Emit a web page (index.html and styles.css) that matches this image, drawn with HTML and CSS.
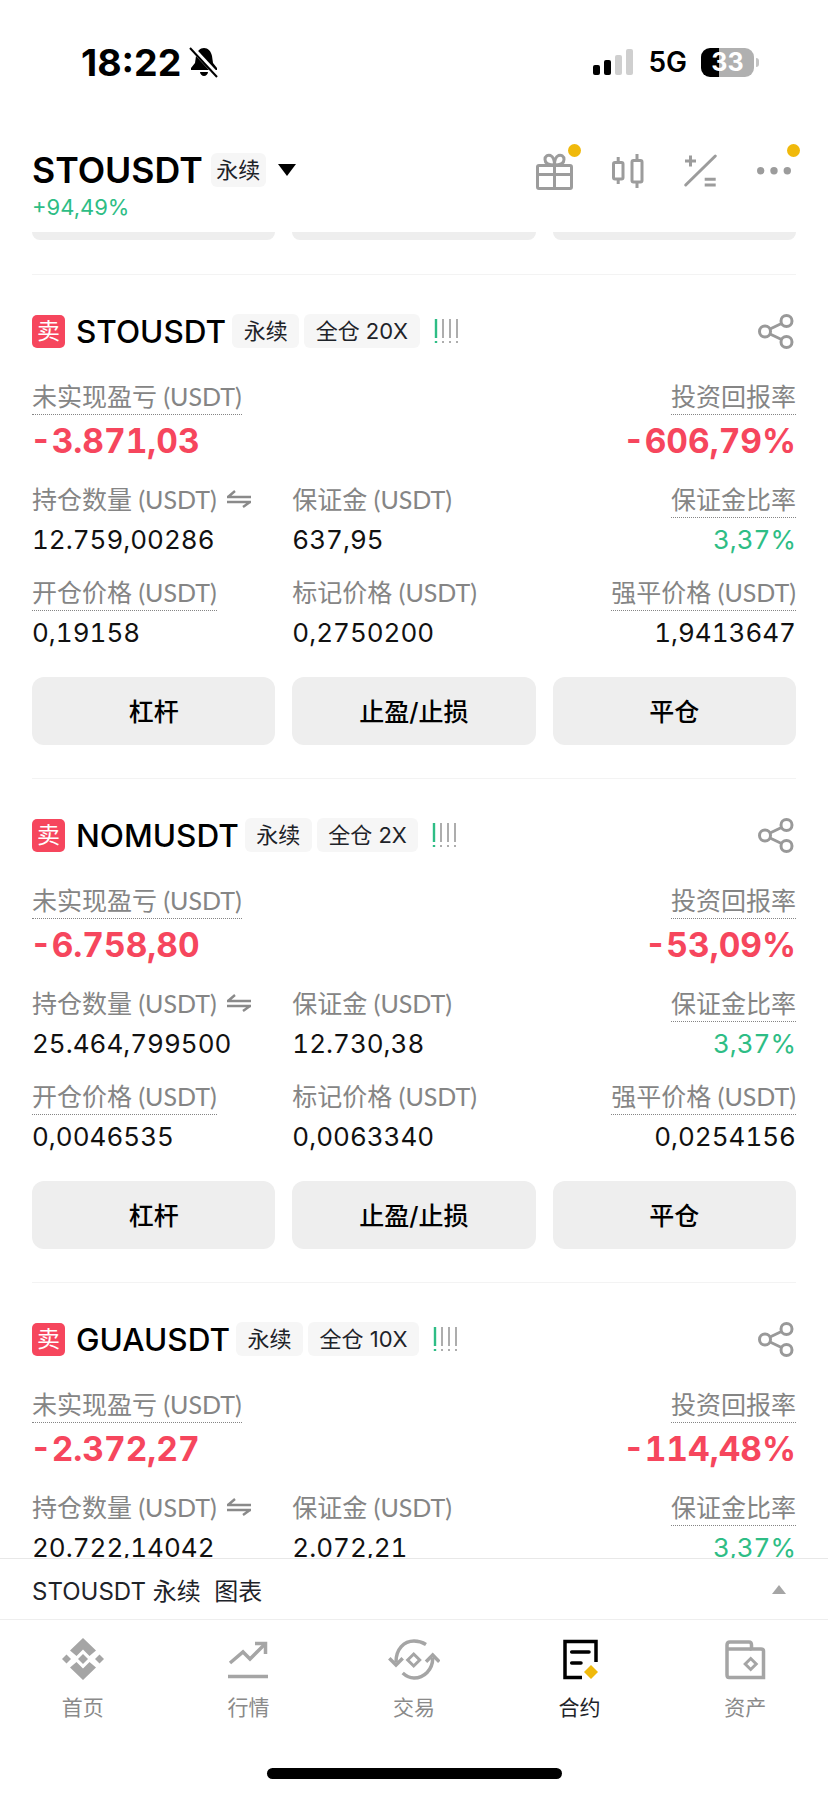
FILE: index.html
```html
<!DOCTYPE html>
<html lang="zh-CN">
<head>
    <meta charset="UTF-8">
    <meta name="viewport" content="width=device-width, initial-scale=1.0">
    <title>STOUSDT 永续</title>
    <link rel="stylesheet" href="styles.css">
</head>
<body>
    <!-- Shared icons -->
    <svg class="sprite" aria-hidden="true">
        <symbol id="icon-share" viewBox="0 0 36 36">
            <g fill="none" stroke="#999" stroke-width="3">
                <circle cx="28.5" cy="8" r="5.5"/>
                <circle cx="28.5" cy="29" r="5.5"/>
                <circle cx="7" cy="18.5" r="5.5"/>
                <path d="M12 16 23.500 10.500M12 21 23.500 26.500"/>
            </g>
        </symbol>
        <symbol id="icon-risk" viewBox="0 0 26 26">
            <g fill="none" stroke-width="1.8">
                <path d="M2 1V20M2 23V25" stroke="#2ebd85" stroke-width="2.4"/>
                <path d="M9 1V20M9 23V25M16 1V20M16 23V25M23 1V20M23 23V25" stroke="#a5a5a5"/>
            </g>
        </symbol>
        <symbol id="icon-swap" viewBox="0 0 26 18">
            <g fill="none" stroke="#8a8a8a" stroke-width="2.4">
                <path d="M1 7H25M2 7 9 1"/>
                <path d="M1 12H25M24 12 17 17"/>
            </g>
        </symbol>
    </svg>

    <div class="screen">
        <!-- Status bar -->
        <div class="status-bar">
            <div class="status-left">
                <span class="clock">18:22</span>
                <svg class="bell" width="30" height="32" viewBox="0 0 30 32">
                    <path d="M15 2c-4 0-7 3-8 8l-1 7-4 5v2h26v-2l-4-5-1-7c-1-5-4-8-8-8zM11 26h8c0 2-2 4-4 4s-4-2-4-4z" fill="#000"/>
                    <path d="M2 1 29 30" stroke="#fff" stroke-width="5"/>
                    <path d="M1 2 28 31" stroke="#000" stroke-width="2"/>
                </svg>
            </div>
            <div class="status-right">
                <div class="signal">
                    <span class="signal-bar bar-1"></span>
                    <span class="signal-bar bar-2"></span>
                    <span class="signal-bar bar-3"></span>
                    <span class="signal-bar bar-4"></span>
                </div>
                <span class="network">5G</span>
                <div class="battery"><span class="battery-level">33</span></div>
                <span class="battery-tip"></span>
            </div>
        </div>

        <!-- Header -->
        <header class="top-header">
            <div class="symbol-box">
                <div class="symbol-row">
                    <span class="symbol-name">STOUSDT</span>
                    <span class="chip chip-top">永续</span>
                    <span class="caret-down"></span>
                </div>
                <div class="symbol-change">+94,49%</div>
            </div>
            <div class="header-icons">
                <div class="header-icon">
                    <svg width="40" height="40" viewBox="0 0 40 40" fill="none" stroke="#9c9c9c" stroke-width="3">
                        <rect x="2.5" y="14.5" width="34" height="23" rx="1.5"/>
                        <path d="M2.5 23.5H36.5M19.5 14.5V37.5"/>
                        <path d="M19.5 14C13 14 10 12 10 8.5 10 5 13 3.5 15.5 4.5 17.5 5.5 19.5 9 19.5 14 19.5 9 21.5 5.5 23.5 4.5 26 3.5 29 5 29 8.5 29 12 26 14 19.5 14Z"/>
                    </svg>
                    <span class="dot"></span>
                </div>
                <div class="header-icon">
                    <svg width="40" height="40" viewBox="0 0 40 40" fill="none" stroke="#9c9c9c" stroke-width="3">
                        <rect x="5.5" y="11.5" width="9.500" height="16.500" rx="1.500"/>
                        <rect x="24" y="9.500" width="10" height="21.500" rx="1.500"/>
                        <path d="M10.200 6V11M10.200 28V33M29 3V9M29 31V37"/>
                    </svg>
                </div>
                <div class="header-icon">
                    <svg width="40" height="40" viewBox="0 0 40 40" fill="none" stroke="#9c9c9c" stroke-width="3">
                        <path d="M4.700 34 34.300 5" stroke-linecap="round"/>
                        <path d="M4 10H15M9.500 4.500V15.500M23.700 28.300H34.700M23.700 34H34.700"/>
                    </svg>
                </div>
                <div class="header-icon">
                    <svg width="40" height="40" viewBox="0 0 40 40" fill="#9c9c9c">
                        <circle cx="6.700" cy="19.700" r="3.700"/>
                        <circle cx="20" cy="19.700" r="3.700"/>
                        <circle cx="33.300" cy="19.700" r="3.700"/>
                    </svg>
                    <span class="dot"></span>
                </div>
            </div>
        </header>

        <!-- Positions -->
        <main class="positions">
            <div class="button-stubs">
                <span></span><span></span><span></span>
            </div>

            <section class="position">
                <div class="position-head">
                    <span class="side-badge">卖</span>
                    <span class="position-name">STOUSDT</span>
                    <span class="chip">永续</span>
                    <span class="chip">全仓 20X</span>
                    <svg class="risk"><use href="#icon-risk"/></svg>
                    <svg class="share"><use href="#icon-share"/></svg>
                </div>
                <div class="pnl-row">
                    <div class="stat">
                        <span class="label dotted">未实现盈亏 (USDT)</span>
                        <span class="pnl">-3.871,03</span>
                    </div>
                    <div class="stat stat-right">
                        <span class="label dotted">投资回报率</span>
                        <span class="pnl">-606,79%</span>
                    </div>
                </div>
                <div class="stat-grid">
                    <div class="stat">
                        <span class="label">持仓数量 (USDT) <svg class="swap"><use href="#icon-swap"/></svg></span>
                        <span class="value">12.759,00286</span>
                    </div>
                    <div class="stat">
                        <span class="label">保证金 (USDT)</span>
                        <span class="value">637,95</span>
                    </div>
                    <div class="stat stat-right">
                        <span class="label dotted">保证金比率</span>
                        <span class="value green">3,37%</span>
                    </div>
                    <div class="stat">
                        <span class="label dotted">开仓价格 (USDT)</span>
                        <span class="value">0,19158</span>
                    </div>
                    <div class="stat">
                        <span class="label">标记价格 (USDT)</span>
                        <span class="value">0,2750200</span>
                    </div>
                    <div class="stat stat-right">
                        <span class="label dotted">强平价格 (USDT)</span>
                        <span class="value">1,9413647</span>
                    </div>
                </div>
                <div class="actions">
                    <button class="action-btn">杠杆</button>
                    <button class="action-btn">止盈/止损</button>
                    <button class="action-btn">平仓</button>
                </div>
            </section>

            <section class="position">
                <div class="position-head">
                    <span class="side-badge">卖</span>
                    <span class="position-name">NOMUSDT</span>
                    <span class="chip">永续</span>
                    <span class="chip">全仓 2X</span>
                    <svg class="risk"><use href="#icon-risk"/></svg>
                    <svg class="share"><use href="#icon-share"/></svg>
                </div>
                <div class="pnl-row">
                    <div class="stat">
                        <span class="label dotted">未实现盈亏 (USDT)</span>
                        <span class="pnl">-6.758,80</span>
                    </div>
                    <div class="stat stat-right">
                        <span class="label dotted">投资回报率</span>
                        <span class="pnl">-53,09%</span>
                    </div>
                </div>
                <div class="stat-grid">
                    <div class="stat">
                        <span class="label">持仓数量 (USDT) <svg class="swap"><use href="#icon-swap"/></svg></span>
                        <span class="value">25.464,799500</span>
                    </div>
                    <div class="stat">
                        <span class="label">保证金 (USDT)</span>
                        <span class="value">12.730,38</span>
                    </div>
                    <div class="stat stat-right">
                        <span class="label dotted">保证金比率</span>
                        <span class="value green">3,37%</span>
                    </div>
                    <div class="stat">
                        <span class="label dotted">开仓价格 (USDT)</span>
                        <span class="value">0,0046535</span>
                    </div>
                    <div class="stat">
                        <span class="label">标记价格 (USDT)</span>
                        <span class="value">0,0063340</span>
                    </div>
                    <div class="stat stat-right">
                        <span class="label dotted">强平价格 (USDT)</span>
                        <span class="value">0,0254156</span>
                    </div>
                </div>
                <div class="actions">
                    <button class="action-btn">杠杆</button>
                    <button class="action-btn">止盈/止损</button>
                    <button class="action-btn">平仓</button>
                </div>
            </section>

            <section class="position">
                <div class="position-head">
                    <span class="side-badge">卖</span>
                    <span class="position-name">GUAUSDT</span>
                    <span class="chip">永续</span>
                    <span class="chip">全仓 10X</span>
                    <svg class="risk"><use href="#icon-risk"/></svg>
                    <svg class="share"><use href="#icon-share"/></svg>
                </div>
                <div class="pnl-row">
                    <div class="stat">
                        <span class="label dotted">未实现盈亏 (USDT)</span>
                        <span class="pnl">-2.372,27</span>
                    </div>
                    <div class="stat stat-right">
                        <span class="label dotted">投资回报率</span>
                        <span class="pnl">-114,48%</span>
                    </div>
                </div>
                <div class="stat-grid">
                    <div class="stat">
                        <span class="label">持仓数量 (USDT) <svg class="swap"><use href="#icon-swap"/></svg></span>
                        <span class="value">20.722,14042</span>
                    </div>
                    <div class="stat">
                        <span class="label">保证金 (USDT)</span>
                        <span class="value">2.072,21</span>
                    </div>
                    <div class="stat stat-right">
                        <span class="label dotted">保证金比率</span>
                        <span class="value green">3,37%</span>
                    </div>
                </div>
            </section>
        </main>

        <!-- Chart bar -->
        <div class="chart-bar">
            <span>STOUSDT 永续&nbsp;&nbsp;图表</span>
            <span class="caret-up"></span>
        </div>

        <!-- Tab bar -->
        <nav class="tabs">
            <a class="tab">
                <svg width="44" height="44" viewBox="0 0 44 44" fill="#a5a5a5">
                    <path d="M22 1 35 13.500 28.500 19 22 12.500 15.500 19 9 13.500Z"/>
                    <path d="M22 43 35 30.500 28.500 25 22 31.500 15.500 25 9 30.500Z"/>
                    <path d="M22 17 27 22 22 27 17 22Z"/>
                    <path d="M5.500 17.500 10 22 5.500 26.500 1 22Z"/>
                    <path d="M38.500 17.500 43 22 38.500 26.500 34 22Z"/>
                </svg>
                <span>首页</span>
            </a>
            <a class="tab">
                <svg width="44" height="44" viewBox="0 0 44 44" fill="none" stroke="#a5a5a5" stroke-width="3.500">
                    <path d="M4 26 17 15 24 22 39 7"/>
                    <path d="M29 6.500H39.500V17"/>
                    <path d="M2 39.500H42"/>
                </svg>
                <span>行情</span>
            </a>
            <a class="tab">
                <svg width="52" height="44" viewBox="0 0 52 44" fill="none" stroke="#a5a5a5" stroke-width="3.500">
                    <path d="M38 7.500C34 5 30 4 26 4 16 4 8 12 8 25"/>
                    <path d="M14.700 36C18 39 22 41 26 41 36 41 44.700 33 44.700 21"/>
                    <path d="M1.300 21.300 8 28 14.700 21.300"/>
                    <path d="M38 24.700 44.700 18 51.300 24.700"/>
                    <path d="M25.700 17 31.700 23 25.700 29 19.700 23Z" stroke-width="3"/>
                </svg>
                <span>交易</span>
            </a>
            <a class="tab tab-active">
                <svg width="44" height="44" viewBox="0 0 44 44" fill="none" stroke="#000" stroke-width="3.500">
                    <path d="M24 40.500H7V4.500H38V25"/>
                    <path d="M13.700 15H31M13.700 26H23" stroke-linecap="round"/>
                    <path d="M33 28 40 35 33 42 26 35Z" fill="#f0b90b" stroke="none"/>
                </svg>
                <span>合约</span>
            </a>
            <a class="tab">
                <svg width="44" height="44" viewBox="0 0 44 44" fill="none" stroke="#a5a5a5" stroke-width="3.500">
                    <path d="M4 12V8C4 6 5 5 7 5H26C27.500 5 28.500 6 28.500 8V12H38C39.500 12 40.500 13 40.500 14V40.500H6C4.500 40.500 4 39.500 4 38Z"/>
                    <path d="M4 12H28.500"/>
                    <path d="M27.700 21.500 33.200 27 27.700 32.500 22.200 27Z" stroke-width="3"/>
                </svg>
                <span>资产</span>
            </a>
        </nav>

        <div class="home-area"><span class="home-indicator"></span></div>
    </div>
</body>
</html>
```

FILE: styles.css
```css
* {
    margin: 0;
    padding: 0;
    box-sizing: border-box;
    font-family: 'Inter', 'Noto Sans CJK SC', sans-serif;
}

body {
    background: #fff;
    color: #1e2329;
}

.sprite {
    display: none;
}

.screen {
    width: 828px;
    height: 1796px;
    display: flex;
    flex-direction: column;
    overflow: hidden;
}

/* Status bar */
.status-bar {
    height: 110px;
    flex: none;
    display: flex;
    justify-content: space-between;
    align-items: flex-start;
    padding: 40px 69px 0 81px;
}

.status-left {
    display: flex;
    align-items: center;
    gap: 8px;
    height: 44px;
}

.clock {
    font-size: 37.5px;
    font-weight: 700;
    color: #000;
}

.status-right {
    display: flex;
    align-items: center;
    height: 44px;
}

.signal {
    display: flex;
    align-items: flex-end;
    gap: 4px;
    margin-right: 15px;
}

.signal-bar {
    width: 7px;
    border-radius: 2px;
    background: #000;
}

.bar-1 { height: 10px; }
.bar-2 { height: 15px; }
.bar-3 { height: 20px; background: #cfcfcf; }
.bar-4 { height: 26px; background: #cfcfcf; }

.network {
    font-size: 28px;
    font-weight: 600;
    color: #000;
    margin-right: 14px;
}

.battery {
    width: 53px;
    height: 29px;
    border-radius: 9px;
    background: linear-gradient(to right, #000 18px, #b0b0b0 18px);
    display: flex;
    align-items: center;
    justify-content: center;
}

.battery-level {
    font-size: 25px;
    font-weight: 700;
    color: #fff;
}

.battery-tip {
    width: 3px;
    height: 9px;
    margin-left: 2px;
    border-radius: 0 3px 3px 0;
    background: #c4c4c4;
}

/* Header */
.top-header {
    flex: none;
    height: 122px;
    padding: 38px 18px 0 32px;
    display: flex;
    justify-content: space-between;
    align-items: flex-start;
}

.symbol-row {
    display: flex;
    align-items: center;
    height: 44px;
}

.symbol-name {
    font-size: 35.7px;
    font-weight: 600;
    color: #000;
}

.chip {
    font-size: 22px;
    line-height: 34px;
    padding: 0 11.5px;
    border-radius: 6px;
    background: #f6f6f6;
    color: #1e2329;
    white-space: nowrap;
}

.chip-top {
    margin-left: 8px;
    padding: 0 5.5px;
}

.caret-down {
    margin-left: 12px;
    border-left: 9px solid transparent;
    border-right: 9px solid transparent;
    border-top: 12px solid #000;
}

.symbol-change {
    font-size: 22px;
    line-height: 30px;
    color: #2ebd85;
}

.header-icons {
    display: flex;
    margin-top: 3px;
}

.header-icon {
    position: relative;
    width: 73px;
    height: 40px;
    display: flex;
    justify-content: center;
}

.dot {
    position: absolute;
    left: 50px;
    top: -7px;
    width: 13px;
    height: 13px;
    border-radius: 50%;
    background: #f0b90b;
}

/* Positions */
.positions {
    flex: 1;
    min-height: 0;
    overflow: hidden;
    padding: 0 32px;
}

.button-stubs {
    display: grid;
    grid-template-columns: repeat(3, 1fr);
    gap: 17px;
    margin-bottom: 34px;
}

.button-stubs span {
    height: 8px;
    background: #eee;
    border-radius: 0 0 12px 12px;
}

.position {
    border-top: 1px solid #f3f3f3;
    padding: 39px 0 33px;
}

.position-head {
    display: flex;
    align-items: center;
    height: 34px;
}

.side-badge {
    width: 33px;
    height: 33px;
    flex: none;
    border-radius: 5px;
    background: #f6465d;
    color: #fff;
    font-size: 23px;
    line-height: 33px;
    text-align: center;
    margin-right: 11px;
}

.position-name {
    font-size: 31.5px;
    font-weight: 500;
    color: #000;
    margin-right: 6px;
}

.position-head .chip {
    margin-right: 5px;
}

.risk {
    width: 26px;
    height: 26px;
    margin-left: 9px;
}

.share {
    width: 36px;
    height: 36px;
    margin-left: auto;
    margin-right: 2px;
}

.pnl-row {
    display: flex;
    justify-content: space-between;
    margin-top: 32px;
}

.stat {
    display: flex;
    flex-direction: column;
    align-items: flex-start;
}

.stat-right {
    align-items: flex-end;
}

.label {
    display: flex;
    align-items: center;
    gap: 9px;
    font-family: 'Lato', 'Noto Sans CJK SC', sans-serif;
    font-size: 25px;
    line-height: 32px;
    height: 35px;
    padding-bottom: 2px;
    border-bottom: 1px dotted transparent;
    color: #858585;
    white-space: nowrap;
}

.label.dotted {
    border-bottom-color: #858585;
}

.swap {
    width: 26px;
    height: 18px;
}

.pnl {
    font-size: 33.5px;
    font-weight: 700;
    line-height: 36px;
    margin: 8px 0 1px -2px;
    color: #f6465d;
    font-variant-numeric: tabular-nums;
}

.stat-grid {
    display: grid;
    grid-template-columns: repeat(3, 1fr);
    column-gap: 17px;
    row-gap: 19px;
    margin-top: 23px;
}

.value {
    font-size: 26px;
    line-height: 34px;
    margin-top: 5px;
    color: #111;
    font-variant-numeric: tabular-nums;
}

.value.green {
    color: #2ebd85;
}

/* Buttons */
.actions {
    display: grid;
    grid-template-columns: repeat(3, 1fr);
    gap: 17px;
    margin-top: 27px;
}

.action-btn {
    height: 68px;
    padding-bottom: 3px;
    border: none;
    border-radius: 12px;
    background: #eee;
    color: #000;
    font-size: 25px;
    font-weight: 500;
}

/* Chart bar */
.chart-bar {
    flex: none;
    height: 62px;
    padding: 0 42px 0 32px;
    border-top: 1px solid #e8e8e8;
    border-bottom: 1px solid #eee;
    background: #fff;
    display: flex;
    justify-content: space-between;
    align-items: center;
    font-size: 24px;
    color: #1e2329;
}

.caret-up {
    border-left: 7px solid transparent;
    border-right: 7px solid transparent;
    border-bottom: 9px solid #a5a5a5;
}

/* Tabs */
.tabs {
    flex: none;
    height: 148px;
    padding-top: 17px;
    display: grid;
    grid-template-columns: repeat(5, 1fr);
    background: #fff;
}

.tab {
    display: flex;
    flex-direction: column;
    align-items: center;
    gap: 13px;
    font-size: 21px;
    line-height: 28px;
    color: #8a8a8a;
}

.tab-active {
    color: #1e2329;
}

.home-area {
    flex: none;
    height: 28px;
    display: flex;
    justify-content: center;
    background: #fff;
}

.home-indicator {
    width: 295px;
    height: 11px;
    border-radius: 6px;
    background: #000;
}
```
